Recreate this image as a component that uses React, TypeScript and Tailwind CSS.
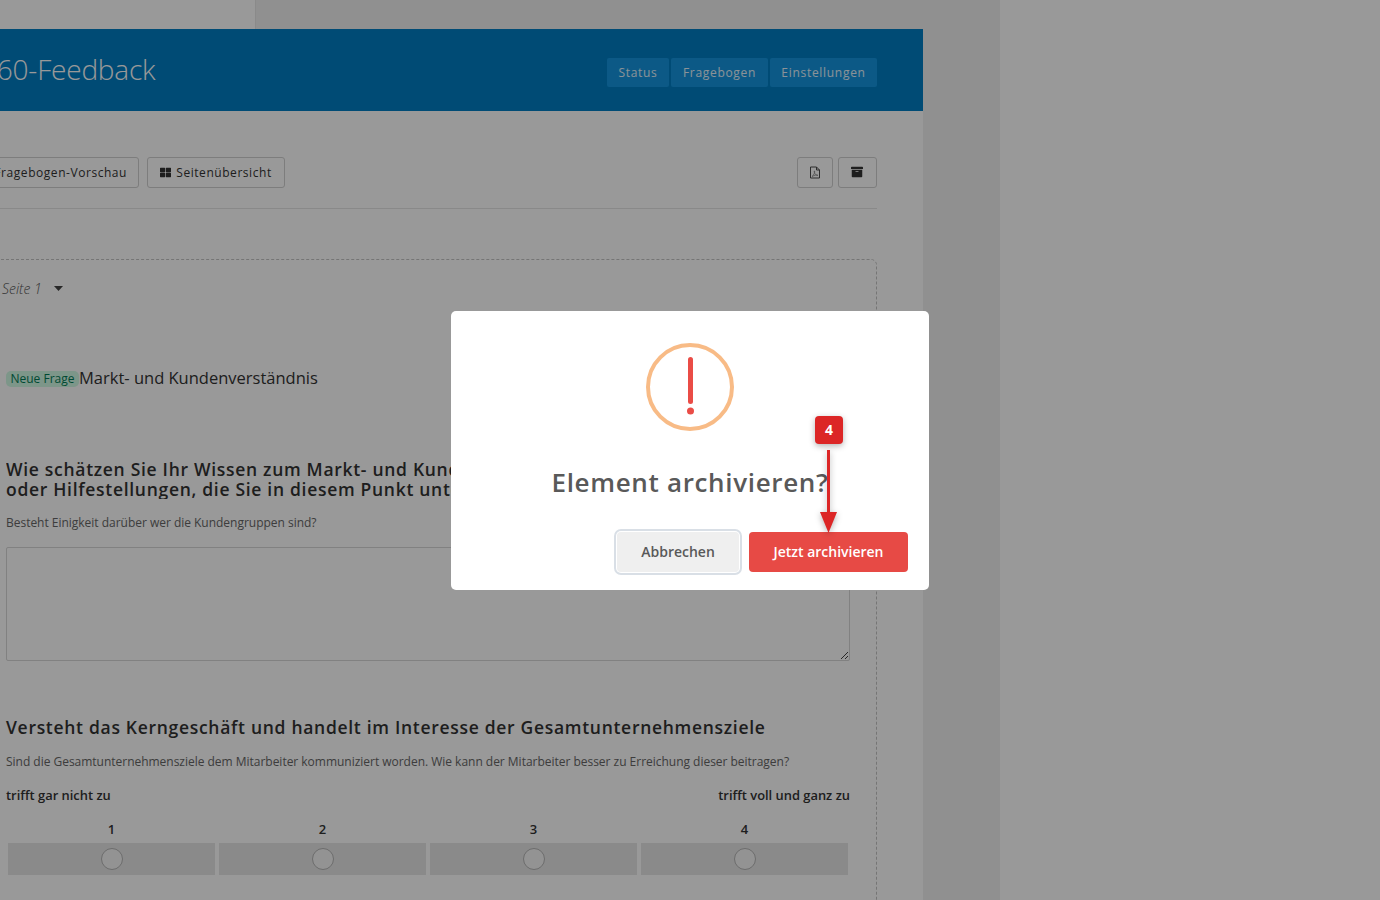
import { FaThLarge, FaArchive } from "react-icons/fa";

const Tab = ({ t, w }: { t: string; w: string }) => (
  <span className={`${w} h-[29px] flex items-center justify-center rounded-[2px] bg-[#1495e0] text-white/90 text-[12px] tracking-[0.7px]`}>{t}</span>
);

const Cell = ({ n }: { n: number }) => (
  <div className="flex flex-col items-center w-[207px]">
    <span className="text-[13px] leading-[18px] font-semibold text-[#333]">{n}</span>
    <div className="mt-[5px] w-full h-[32px] bg-[#e6e6e6] flex items-center justify-center">
      <span className="w-[22px] h-[22px] rounded-full border border-[#b5b5b5] bg-[#f5f5f5]" />
    </div>
  </div>
);

export default function App() {
  return (
    <div className="relative w-[1380px] h-[900px] overflow-hidden bg-white font-['Open_Sans',sans-serif] text-[#333]">
      <div className="w-[1000px] h-[900px] bg-[#f0f0f0] overflow-hidden">
        <div className="h-[29px] w-[256px] bg-white border-r border-[#e6e6e6]" />
        <div className="w-[923px] h-[871px] bg-white overflow-hidden">
          <div className="h-[82px] bg-[#007dc3] flex items-center justify-between pr-[46px]">
            <h1 className="-ml-[19px] text-[28px] font-light leading-[38px] tracking-[-0.2px] text-white -mt-[3px]">360-Feedback</h1>
            <div className="flex gap-[2px] mt-[5px]">
              <Tab t="Status" w="w-[62px]" />
              <Tab t="Fragebogen" w="w-[97px]" />
              <Tab t="Einstellungen" w="w-[107px]" />
            </div>
          </div>

          <div className="pr-[46px]">
            <div className="mt-[46px] h-[52px] flex items-start justify-between border-b border-[#e4e4e4]">
              <div className="flex gap-[8px] -ml-[30px]">
                <button className="h-[31px] w-[169px] pr-[11px] border border-[#d0d0d0] rounded-[3px] text-[12px] tracking-[0.55px] flex items-center justify-end whitespace-nowrap overflow-hidden">
                  Fragebogen-Vorschau
                </button>
                <button className="h-[31px] w-[138px] border border-[#d0d0d0] rounded-[3px] text-[12px] tracking-[0.55px] flex items-center justify-center gap-[5px]">
                  <FaThLarge className="text-[11px]" /> Seitenübersicht
                </button>
              </div>
              <div className="flex gap-[5px]">
                <button className="h-[31px] w-[36px] border border-[#d0d0d0] rounded-[3px] flex items-center justify-center">
                  <svg width="12" height="13" viewBox="0 0 12 13" fill="none">
                    <path d="M1.5 1H7.5L10.5 4V12H1.5Z" stroke="#4a4a4a" strokeWidth="1" />
                    <path d="M7.5 1V4H10.5" stroke="#4a4a4a" strokeWidth="1" />
                    <path d="M3 10.5C5 9 6 6.5 5.6 5C5.4 4.6 5 5 5.4 6.5C6 8.5 7.5 9.5 9 9.4C8.5 8.6 5.5 9 3 10.5Z" stroke="#777" strokeWidth="0.7" />
                  </svg>
                </button>
                <button className="h-[31px] w-[39px] border border-[#d0d0d0] rounded-[3px] flex items-center justify-center">
                  <FaArchive className="text-[12px] -ml-[1px] -mt-[1px]" />
                </button>
              </div>
            </div>

            <div className="mt-[50px] -ml-[20px] pl-[25px] pr-[26px] border border-dashed border-[#c4c4c4] rounded-[6px] h-[700px]">
              <div className="mt-[18px] -ml-[4px] flex items-center gap-[12px] h-[20px] text-[14px] font-light italic text-[#555]">
                Seite 1
                <svg width="9" height="5" viewBox="0 0 9 5"><path d="M0 0H9L4.5 5Z" fill="#444" /></svg>
              </div>
              <div className="mt-[68px] flex items-center h-[24px]">
                <span className="h-[16px] w-[73px] bg-emerald-100 rounded-[5px] text-[12px] leading-[16px] text-center text-emerald-700 translate-y-[1px]">Neue Frage</span>
                <span className="text-[16.5px] leading-[24px] text-[#333]">Markt- und Kundenverständnis</span>
              </div>
              <h3 className="mt-[69px] text-[17.5px] leading-[20px] font-semibold tracking-[0.7px] whitespace-nowrap overflow-hidden">
                Wie schätzen Sie Ihr Wissen zum Markt- und Kundenverständnis ein? Welche Unterstützung<br />
                oder Hilfestellungen, die Sie in diesem Punkt unterstützen, wünschen Sie sich?
              </h3>
              <p className="mt-[15px] text-[12px] leading-[18px] tracking-[-0.02px] text-[#666]">Besteht Einigkeit darüber wer die Kundengruppen sind?</p>
              <div className="mt-[15px] relative h-[114px] border border-[#d8d8d8] rounded-[2px]">
                <svg className="absolute right-0 bottom-0" width="9" height="9" viewBox="0 0 9 9" stroke="#444" strokeWidth="1">
                  <path d="M1 8 8 1M5 8 8 5" />
                </svg>
              </div>
              <h3 className="mt-[56px] text-[17.5px] leading-[20px] font-semibold tracking-[0.7px]">
                Versteht das Kerngeschäft und handelt im Interesse der Gesamtunternehmensziele
              </h3>
              <p className="mt-[16px] text-[12px] leading-[18px] tracking-[-0.02px] text-[#666]">
                Sind die Gesamtunternehmensziele dem Mitarbeiter kommuniziert worden. Wie kann der Mitarbeiter besser zu Erreichung dieser beitragen?
              </p>
              <div className="mt-[15px] flex justify-between text-[12.9px] leading-[18px] font-semibold">
                <span>trifft gar nicht zu</span>
                <span>trifft voll und ganz zu</span>
              </div>
              <div className="mt-[16px] px-[2px] flex gap-[4px]">
                <Cell n={1} />
                <Cell n={2} />
                <Cell n={3} />
                <Cell n={4} />
              </div>
            </div>
          </div>
        </div>
      </div>

      <div className="absolute inset-0 bg-black/40 flex items-center justify-center">
        <div className="relative w-[478px] h-[279px] bg-white rounded-[5px] flex flex-col items-center pt-[32px]">
          <svg width="88" height="88" viewBox="0 0 88 88">
            <circle cx="44" cy="44" r="42" fill="none" stroke="#f8bb86" strokeWidth="4" />
            <rect x="42" y="14" width="5" height="47" rx="2.5" fill="#ea4c46" />
            <circle cx="44.5" cy="68" r="3.5" fill="#ea4c46" />
          </svg>
          <h2 className="mt-[32px] text-[26px] leading-[38px] font-semibold tracking-[0.66px] text-[#595959]">Element archivieren?</h2>
          <div className="mt-[31px] self-end mr-[21px] flex items-center gap-[10px]">
            <button className="w-[122px] h-[40px] rounded-[4px] bg-[#efefef] text-[14px] font-semibold text-[#595959] shadow-[0_0_0_1px_#fff,0_0_0_3px_#d9dfe6]">Abbrechen</button>
            <button className="w-[159px] h-[40px] rounded-[4px] bg-[#e74a45] text-[14px] font-semibold text-white">Jetzt archivieren</button>
          </div>
          <span className="absolute left-[364px] top-[105px] w-[28px] h-[28px] rounded-[4px] bg-[#dc2626] text-white text-[14px] font-bold flex items-center justify-center shadow-[0_2px_6px_rgba(0,0,0,0.3)]">4</span>
          <svg className="absolute left-[367px] top-[138px] drop-shadow-[0_2px_3px_rgba(0,0,0,0.3)]" width="21" height="86" viewBox="0 0 21 86">
            <rect x="9" y="1" width="3" height="64" fill="#dc2626" />
            <path d="M2 63H19L10.5 84Z" fill="#dc2626" />
          </svg>
        </div>
      </div>
    </div>
  );
}
